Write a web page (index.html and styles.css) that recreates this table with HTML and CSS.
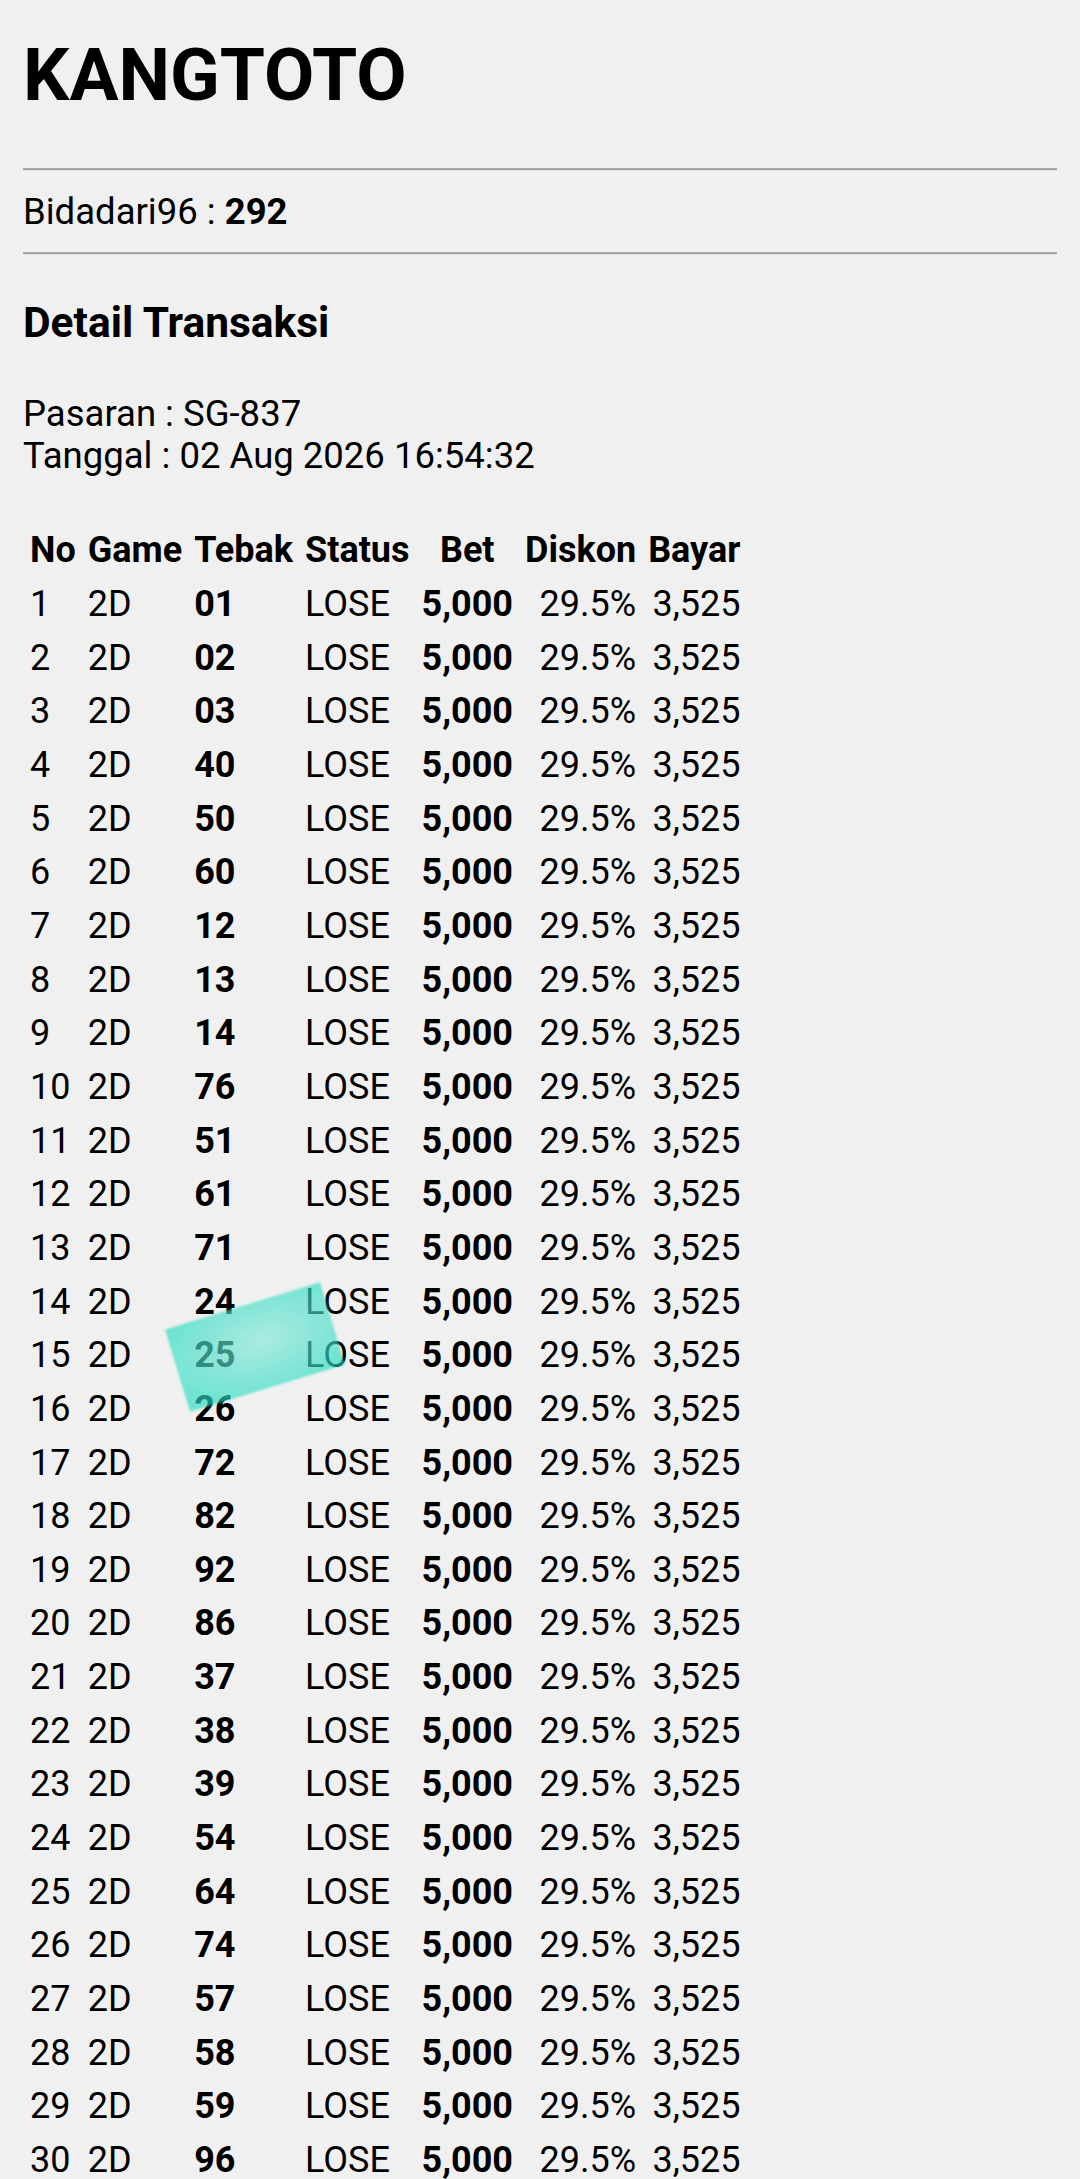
FILE: index.html
```
<!DOCTYPE html>
<html>
<head>
<meta charset="UTF-8">
<title>KANGTOTO - Detail Transaksi</title>
<link rel="stylesheet" href="styles.css">
</head>
<body>

<h1 class="brand">KANGTOTO</h1>
<hr class="rule" />

<p class="saldo">Bidadari96 : <b>292</b></p>
<hr class="rule rule2" />

<h2 class="title">Detail Transaksi</h2>

<p class="info">
	Pasaran : SG-837<br />
	Tanggal : 02 Aug 2026 16:54:32
</p>

<div class="tableWrap">
<table class="trx">
	<tr>
		<th>No</th>
		<th>Game</th>
		<th>Tebak</th>
		<th>Status</th>
		<th>Bet</th>
		<th>Diskon</th>
		<th>Bayar</th>
	</tr>
	<tr><td>1</td><td>2D</td><td class="num">01</td><td>LOSE</td><td class="bet">5,000</td><td class="r">29.5%</td><td class="r">3,525</td></tr>
	<tr><td>2</td><td>2D</td><td class="num">02</td><td>LOSE</td><td class="bet">5,000</td><td class="r">29.5%</td><td class="r">3,525</td></tr>
	<tr><td>3</td><td>2D</td><td class="num">03</td><td>LOSE</td><td class="bet">5,000</td><td class="r">29.5%</td><td class="r">3,525</td></tr>
	<tr><td>4</td><td>2D</td><td class="num">40</td><td>LOSE</td><td class="bet">5,000</td><td class="r">29.5%</td><td class="r">3,525</td></tr>
	<tr><td>5</td><td>2D</td><td class="num">50</td><td>LOSE</td><td class="bet">5,000</td><td class="r">29.5%</td><td class="r">3,525</td></tr>
	<tr><td>6</td><td>2D</td><td class="num">60</td><td>LOSE</td><td class="bet">5,000</td><td class="r">29.5%</td><td class="r">3,525</td></tr>
	<tr><td>7</td><td>2D</td><td class="num">12</td><td>LOSE</td><td class="bet">5,000</td><td class="r">29.5%</td><td class="r">3,525</td></tr>
	<tr><td>8</td><td>2D</td><td class="num">13</td><td>LOSE</td><td class="bet">5,000</td><td class="r">29.5%</td><td class="r">3,525</td></tr>
	<tr><td>9</td><td>2D</td><td class="num">14</td><td>LOSE</td><td class="bet">5,000</td><td class="r">29.5%</td><td class="r">3,525</td></tr>
	<tr><td>10</td><td>2D</td><td class="num">76</td><td>LOSE</td><td class="bet">5,000</td><td class="r">29.5%</td><td class="r">3,525</td></tr>
	<tr><td>11</td><td>2D</td><td class="num">51</td><td>LOSE</td><td class="bet">5,000</td><td class="r">29.5%</td><td class="r">3,525</td></tr>
	<tr><td>12</td><td>2D</td><td class="num">61</td><td>LOSE</td><td class="bet">5,000</td><td class="r">29.5%</td><td class="r">3,525</td></tr>
	<tr><td>13</td><td>2D</td><td class="num">71</td><td>LOSE</td><td class="bet">5,000</td><td class="r">29.5%</td><td class="r">3,525</td></tr>
	<tr><td>14</td><td>2D</td><td class="num">24</td><td>LOSE</td><td class="bet">5,000</td><td class="r">29.5%</td><td class="r">3,525</td></tr>
	<tr><td>15</td><td>2D</td><td class="num">25</td><td>LOSE</td><td class="bet">5,000</td><td class="r">29.5%</td><td class="r">3,525</td></tr>
	<tr><td>16</td><td>2D</td><td class="num">26</td><td>LOSE</td><td class="bet">5,000</td><td class="r">29.5%</td><td class="r">3,525</td></tr>
	<tr><td>17</td><td>2D</td><td class="num">72</td><td>LOSE</td><td class="bet">5,000</td><td class="r">29.5%</td><td class="r">3,525</td></tr>
	<tr><td>18</td><td>2D</td><td class="num">82</td><td>LOSE</td><td class="bet">5,000</td><td class="r">29.5%</td><td class="r">3,525</td></tr>
	<tr><td>19</td><td>2D</td><td class="num">92</td><td>LOSE</td><td class="bet">5,000</td><td class="r">29.5%</td><td class="r">3,525</td></tr>
	<tr><td>20</td><td>2D</td><td class="num">86</td><td>LOSE</td><td class="bet">5,000</td><td class="r">29.5%</td><td class="r">3,525</td></tr>
	<tr><td>21</td><td>2D</td><td class="num">37</td><td>LOSE</td><td class="bet">5,000</td><td class="r">29.5%</td><td class="r">3,525</td></tr>
	<tr><td>22</td><td>2D</td><td class="num">38</td><td>LOSE</td><td class="bet">5,000</td><td class="r">29.5%</td><td class="r">3,525</td></tr>
	<tr><td>23</td><td>2D</td><td class="num">39</td><td>LOSE</td><td class="bet">5,000</td><td class="r">29.5%</td><td class="r">3,525</td></tr>
	<tr><td>24</td><td>2D</td><td class="num">54</td><td>LOSE</td><td class="bet">5,000</td><td class="r">29.5%</td><td class="r">3,525</td></tr>
	<tr><td>25</td><td>2D</td><td class="num">64</td><td>LOSE</td><td class="bet">5,000</td><td class="r">29.5%</td><td class="r">3,525</td></tr>
	<tr><td>26</td><td>2D</td><td class="num">74</td><td>LOSE</td><td class="bet">5,000</td><td class="r">29.5%</td><td class="r">3,525</td></tr>
	<tr><td>27</td><td>2D</td><td class="num">57</td><td>LOSE</td><td class="bet">5,000</td><td class="r">29.5%</td><td class="r">3,525</td></tr>
	<tr><td>28</td><td>2D</td><td class="num">58</td><td>LOSE</td><td class="bet">5,000</td><td class="r">29.5%</td><td class="r">3,525</td></tr>
	<tr><td>29</td><td>2D</td><td class="num">59</td><td>LOSE</td><td class="bet">5,000</td><td class="r">29.5%</td><td class="r">3,525</td></tr>
	<tr><td>30</td><td>2D</td><td class="num">96</td><td>LOSE</td><td class="bet">5,000</td><td class="r">29.5%</td><td class="r">3,525</td></tr>
</table>

<!-- stiker hijau di atas baris 14-16 -->
<div class="smudge"></div>
</div>

</body>
</html>
```

FILE: styles.css
```
/* dasar */
html, body {
	margin: 0;
	padding: 0;
	background: #f0f0f0;
	color: #000;
	font-family: Roboto, "Liberation Sans", sans-serif;
}
body {
	padding: 0 23px 0 23px;
}

.brand {
	margin: 33px 0 0;
	font-size: 73px;
	line-height: 85px;
	font-weight: 700;
}

.rule {
	height: 0;
	margin: 50px 0 0;
	border: 0;
	border-top: 2px solid #a3a3a3;
	border-bottom: 1px solid #e2e2e2;
}
.rule2 {
	margin-top: 19px;
}

.saldo {
	margin: 20px 0 0;
	font-size: 36.5px;
	line-height: 42px;
}

.title {
	margin: 43px 0 0;
	font-size: 42.5px;
	line-height: 49px;
	font-weight: 700;
}

.info {
	margin: 46px 0 0;
	font-size: 36.5px;
	line-height: 42px;
}

/* tabel transaksi */
.tableWrap {
	position: relative;
	margin: 43px 0 0 -2px;
}
.trx {
	border-spacing: 6px;
	font-size: 36px;
	line-height: 41.65px;
}
.trx th {
	padding: 3px;
	line-height: 43px;
	font-weight: 700;
	text-align: center;
}
.trx td {
	padding: 3px;
	text-align: left;
	white-space: nowrap;
}
.trx .num {
	font-weight: 700;
}
.trx .bet {
	font-weight: 700;
	text-align: right;
}
.trx .r {
	text-align: right;
}

.smudge {
	position: absolute;
	left: 153px;
	top: 784px;
	width: 162px;
	height: 86px;
	transform: rotate(-17deg);
	background: radial-gradient(ellipse at 55% 45%, rgba(130, 232, 218, 0.62), rgba(40, 220, 192, 0.64) 80%);
	filter: blur(1px);
}
```
